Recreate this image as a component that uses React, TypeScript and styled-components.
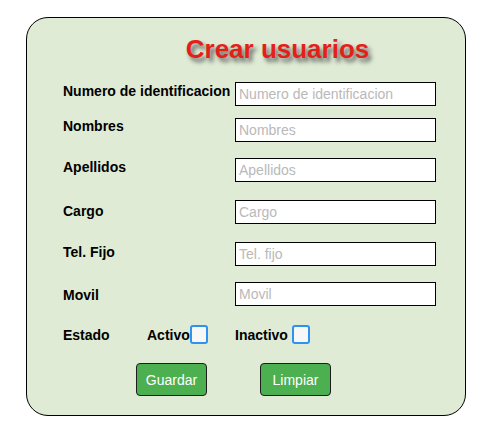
import React from 'react'
import styled, { createGlobalStyle } from 'styled-components'

const GlobalStyle = createGlobalStyle`
  body {
    margin: 0;
    background: #fff;
    font-family: "Liberation Sans", Arial, sans-serif;
  }
`

const Panel = styled.form`
  box-sizing: border-box;
  width: 440px;
  margin: 17px 0 0 26px;
  padding: 16px 0 19px 36px;
  background: #dfebd5;
  border: 1px solid #000;
  border-radius: 22px;
`

const Title = styled.h1`
  margin: 0;
  padding-left: 27px;
  text-align: center;
  font-size: 26px;
  line-height: 30px;
  font-weight: bold;
  color: #e41f1a;
  text-shadow: 3px 4px 4px rgba(60, 60, 60, 0.75);
`

const Row = styled.div<{ $top: number }>`
  display: grid;
  grid-template-columns: 172px 201px;
  margin-top: ${p => p.$top}px;
`

const Label = styled.label<{ $shift: number }>`
  padding-top: ${p => p.$shift}px;
  font-size: 14px;
  line-height: 16px;
  font-weight: bold;
  color: #000;
`

const Field = styled.input`
  box-sizing: border-box;
  width: 201px;
  height: 24px;
  margin: 0;
  padding: 0 3px;
  border: 1px solid #000;
  background: #fff;
  font-family: "Liberation Sans", Arial, sans-serif;
  font-size: 14px;
  &::placeholder {
    color: #b9b9b9;
  }
`

const StatusRow = styled.div`
  display: grid;
  grid-template-columns: 84px 88px auto;
  align-items: center;
  margin-top: 19px;
`

const Option = styled.label<{ $space: number }>`
  display: flex;
  align-items: center;
  gap: ${p => p.$space}px;
  font-size: 14px;
  line-height: 16px;
  font-weight: bold;
`

const Check = styled.input`
  appearance: none;
  box-sizing: border-box;
  width: 18px;
  height: 19px;
  margin: 0;
  border: 2px solid #2e93f0;
  border-radius: 3px;
  background: #f7f7f7;
`

const Actions = styled.div`
  display: flex;
  gap: 53px;
  margin: 19px 0 0 73px;
`

const Button = styled.button`
  box-sizing: border-box;
  width: 71px;
  height: 33px;
  padding: 0;
  border: 1px solid #1d1d1d;
  border-radius: 4px;
  background: #4caf50;
  color: #fff;
  font-family: "Liberation Sans", Arial, sans-serif;
  font-size: 14px;
`

const fields = [
  { label: 'Numero de identificacion', hint: 'Numero de identificacion', top: 18, shift: 1 },
  { label: 'Nombres', hint: 'Nombres', top: 12, shift: 0 },
  { label: 'Apellidos', hint: 'Apellidos', top: 16, shift: 1 },
  { label: 'Cargo', hint: 'Cargo', top: 18, shift: 3 },
  { label: 'Tel. Fijo', hint: 'Tel. fijo', top: 18, shift: 2 },
  { label: 'Movil', hint: 'Movil', top: 16, shift: 5 },
]

function App() {
  return (
    <>
      <GlobalStyle />
      <Panel onSubmit={e => e.preventDefault()}>
        <Title>Crear usuarios</Title>
        {fields.map(f => (
          <Row key={f.label} $top={f.top}>
            <Label $shift={f.shift}>{f.label}</Label>
            <Field type="text" placeholder={f.hint} />
          </Row>
        ))}
        <StatusRow>
          <Option $space={0}>Estado</Option>
          <Option $space={0}>
            Activo
            <Check type="checkbox" />
          </Option>
          <Option $space={4}>
            Inactivo
            <Check type="checkbox" />
          </Option>
        </StatusRow>
        <Actions>
          <Button type="submit">Guardar</Button>
          <Button type="reset">Limpiar</Button>
        </Actions>
      </Panel>
    </>
  )
}

export default App
